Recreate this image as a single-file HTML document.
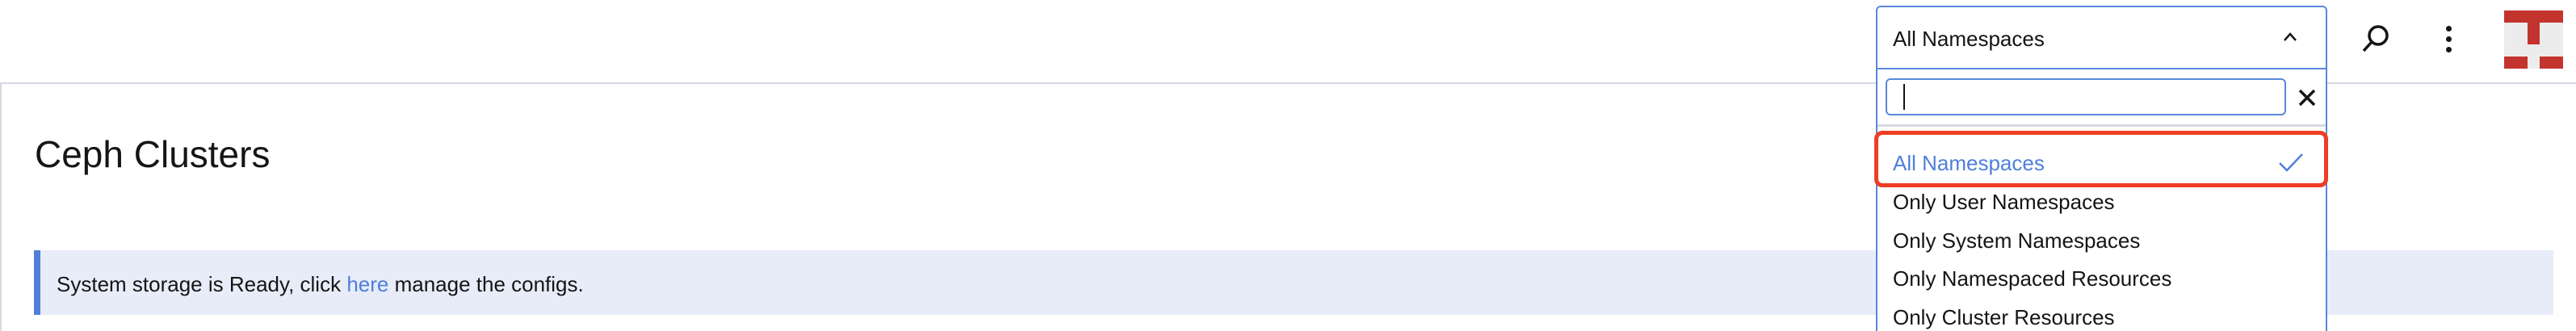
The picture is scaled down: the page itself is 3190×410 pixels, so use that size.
<!DOCTYPE html>
<html style="width:3190px;height:410px;overflow:hidden"><head><meta charset="utf-8"><style>
*{margin:0;padding:0;box-sizing:border-box}
body{width:3190px;height:410px;background:#fff;position:relative;overflow:hidden;font-family:"Liberation Sans",sans-serif;color:#151515}
.a{position:absolute}
.t{white-space:nowrap;font-size:26px;line-height:1}
</style></head><body>
<div class="a" style="left:0;top:102px;width:3190px;height:2px;background:#d6d9e3"></div>
<div class="a" style="left:0;top:102px;width:2px;height:308px;background:#d6d9e3"></div>
<div class="a t" style="left:43px;top:168px;font-size:46px">Ceph Clusters</div>
<div class="a" style="left:42px;top:310px;width:3120px;height:80px;background:#e7ecf8;border-left:8px solid #4f7fdb"></div>
<div class="a t" style="left:70px;top:339px;font-size:26px">System storage is Ready, click <span style="color:#4f7fdb">here</span> manage the configs.</div>

<div class="a" style="left:2323px;top:7px;width:559px;height:403px;background:#fff;border:2px solid #5a87dc;border-bottom:none;border-radius:6px 6px 0 0"></div>
<div class="a" style="left:2325px;top:84px;width:555px;height:2px;background:#5a87dc"></div>
<div class="a t" style="left:2344px;top:35px">All Namespaces</div>
<svg class="a" style="left:2826px;top:38px" width="20" height="16" viewBox="0 0 20 16"><path d="M3 12 L10 4 L17 12" stroke="#151515" stroke-width="2.5" fill="none"/></svg>
<div class="a" style="left:2335px;top:97px;width:496px;height:46px;border:2px solid #5a87dc;border-radius:6px"></div>
<div class="a" style="left:2357px;top:104px;width:2px;height:32px;background:#151515"></div>
<svg class="a" style="left:2845px;top:109px" width="24" height="24" viewBox="0 0 24 24"><path d="M3 3 L21 21 M21 3 L3 21" stroke="#151515" stroke-width="3.5"/></svg>
<div class="a" style="left:2325px;top:154px;width:555px;height:3px;background:#d6d9e3"></div>
<div class="a" style="left:2321px;top:162px;width:562px;height:70px;border:5px solid #ee3e24;border-radius:10px"></div>
<div class="a t" style="left:2344px;top:189px;color:#4f7fdb">All Namespaces</div>
<svg class="a" style="left:2820px;top:188px" width="34" height="26" viewBox="0 0 34 26"><path d="M3 14 L12 23 L31 3" stroke="#4f7fdb" stroke-width="2.5" fill="none"/></svg>
<div class="a t" style="left:2344px;top:237px">Only User Namespaces</div>
<div class="a t" style="left:2344px;top:285px">Only System Namespaces</div>
<div class="a t" style="left:2344px;top:332px">Only Namespaced Resources</div>
<div class="a t" style="left:2344px;top:380px">Only Cluster Resources</div>

<svg class="a" style="left:2922px;top:28px" width="40" height="40" viewBox="0 0 40 40"><circle cx="23" cy="16" r="11" stroke="#151515" stroke-width="3.5" fill="none"/><path d="M15 24 L5 35" stroke="#151515" stroke-width="3.5"/></svg>
<div class="a" style="left:3029px;top:32px;width:7px;height:7px;border-radius:50%;background:#151515"></div>
<div class="a" style="left:3029px;top:45px;width:7px;height:7px;border-radius:50%;background:#151515"></div>
<div class="a" style="left:3029px;top:58px;width:7px;height:7px;border-radius:50%;background:#151515"></div>
<div class="a" style="left:3101px;top:13px;width:73px;height:72px;background:#ececec"></div>
<div class="a" style="left:3101px;top:13px;width:73px;height:15px;background:#c4342e"></div>
<div class="a" style="left:3130px;top:28px;width:15px;height:27px;background:#c4342e"></div>
<div class="a" style="left:3101px;top:70px;width:29px;height:15px;background:#c4342e"></div>
<div class="a" style="left:3145px;top:70px;width:29px;height:15px;background:#c4342e"></div>
</body></html>
